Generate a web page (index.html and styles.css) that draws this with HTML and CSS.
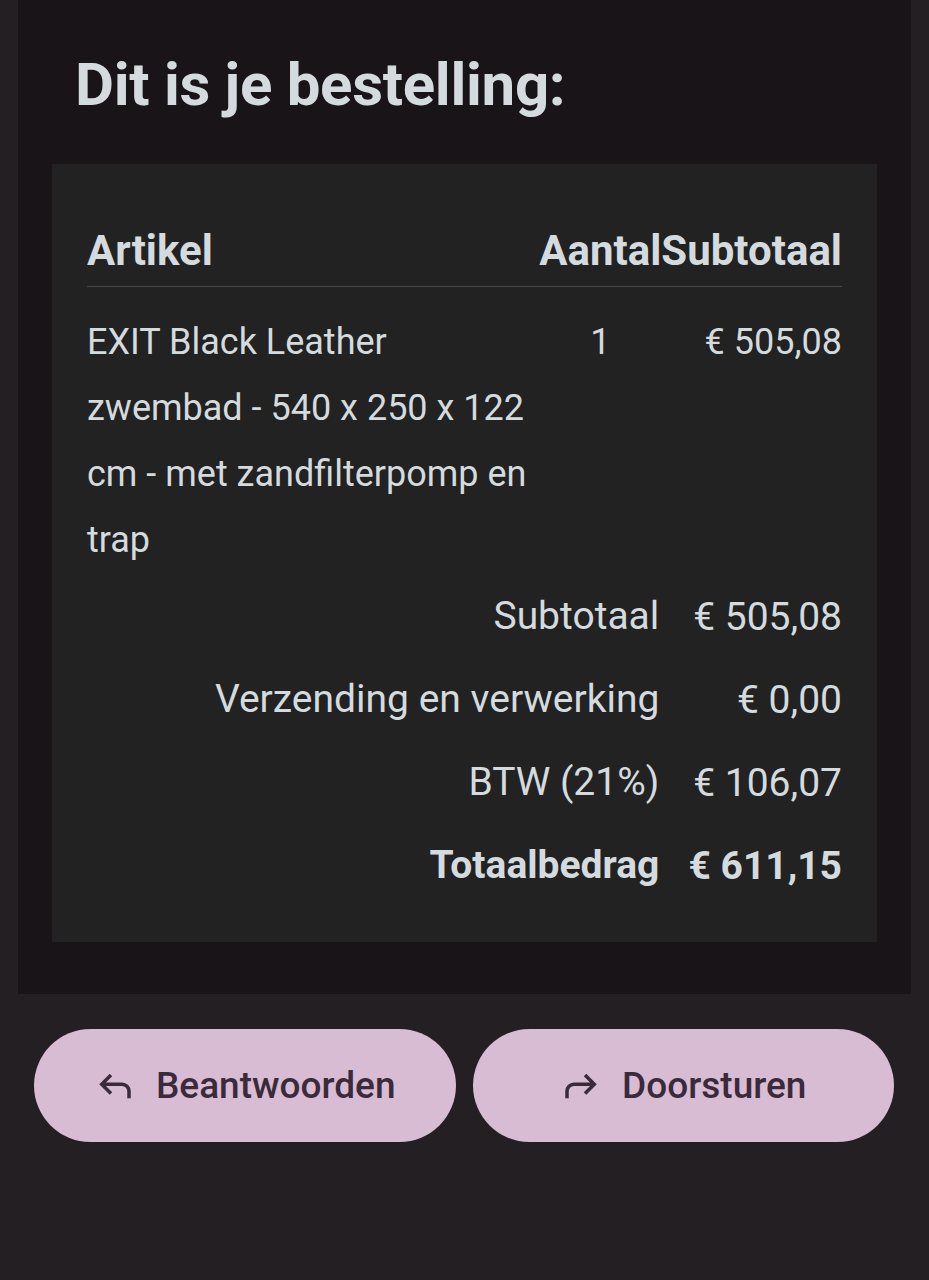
FILE: index.html
```html
<!DOCTYPE html>
<html lang="nl">
<head>
    <meta charset="UTF-8">
    <meta name="viewport" content="width=device-width, initial-scale=1.0">
    <title>Bestelling</title>
    <link rel="stylesheet" href="styles.css">
</head>
<body>
    <div class="mail">
        <h1 class="title">Dit is je bestelling:</h1>
        <div class="order">
            <table class="order-table">
                <thead>
                    <tr>
                        <th class="col-item">Artikel</th>
                        <th class="col-qty">Aantal</th>
                        <th class="col-price">Subtotaal</th>
                    </tr>
                </thead>
                <tbody>
                    <tr class="item">
                        <td class="col-item">EXIT Black Leather zwembad - 540 x 250 x 122 cm - met zandfilterpomp en trap</td>
                        <td class="col-qty">1</td>
                        <td class="col-price">€ 505,08</td>
                    </tr>
                </tbody>
                <tfoot>
                    <tr>
                        <td colspan="2" class="sum-label">Subtotaal</td>
                        <td class="sum-value">€ 505,08</td>
                    </tr>
                    <tr>
                        <td colspan="2" class="sum-label">Verzending en verwerking</td>
                        <td class="sum-value">€ 0,00</td>
                    </tr>
                    <tr>
                        <td colspan="2" class="sum-label">BTW (21%)</td>
                        <td class="sum-value">€ 106,07</td>
                    </tr>
                    <tr class="total">
                        <td colspan="2" class="sum-label">Totaalbedrag</td>
                        <td class="sum-value">€ 611,15</td>
                    </tr>
                </tfoot>
            </table>
        </div>
    </div>

    <div class="actions">
        <button type="button" class="pill">
            <svg class="pill-icon" viewBox="0 -960 960 960"><path d="M760-200v-160q0-50-35-85t-85-35H273l144 144-57 56-240-240 240-240 57 56-144 144h367q83 0 141.5 58.5T840-360v160h-80Z"/></svg>
            <span>Beantwoorden</span>
        </button>
        <button type="button" class="pill">
            <svg class="pill-icon" viewBox="0 -960 960 960"><path d="M120-200v-160q0-83 58.5-141.5T320-560h367L543-704l57-56 240 240-240 240-57-56 144-144H320q-50 0-85 35t-35 85v160h-80Z"/></svg>
            <span>Doorsturen</span>
        </button>
    </div>
</body>
</html>
```

FILE: styles.css
```css
*{
    margin: 0;
    padding: 0;
    box-sizing: border-box;
}
body{
    background-color: #241f23;
    font-family: Roboto, "Noto Sans", sans-serif;
    color: #d4dbde;
}
.mail{
    margin: 0 18px;
    background-color: #181418;
    padding: 50px 34px 52px;
}
.title{
    padding-left: 23px;
    font-size: 60px;
    font-weight: 700;
    line-height: 70px;
    letter-spacing: -0.3px;
    margin-bottom: 44px;
}
.order{
    background-color: #222222;
    padding: 63px 35px 35px;
}
.order-table{
    width: 100%;
    border-collapse: collapse;
    font-size: 39px;
}
.order-table th{
    font-weight: 700;
    font-size: 42px;
    line-height: 48px;
    padding-bottom: 11px;
    border-bottom: 1px solid #464646;
    text-align: left;
    white-space: nowrap;
}
.order-table th.col-qty,
.order-table th.col-price{
    text-align: right;
    width: 1%;
}
.item td{
    font-size: 36px;
    line-height: 66px;
    vertical-align: top;
    padding: 22px 0 2px;
}
.item .col-item{
    padding-right: 8px;
}
.item .col-qty{
    text-align: center;
}
.item .col-price{
    text-align: right;
    white-space: nowrap;
}
.sum-label{
    text-align: right;
    line-height: 83px;
    padding-right: 2px;
    white-space: nowrap;
}
.sum-value{
    text-align: right;
    white-space: nowrap;
}
.total td{
    font-weight: 700;
}
.actions{
    display: flex;
    gap: 17px;
    padding: 35px 35px 0 34px;
}
.pill{
    flex: 1;
    height: 113px;
    border: none;
    border-radius: 57px;
    background-color: #d7bcd4;
    color: #3b2a39;
    font-family: Roboto, "Noto Sans", sans-serif;
    font-size: 37px;
    font-weight: 500;
    display: flex;
    align-items: center;
    justify-content: center;
    gap: 20px;
}
.pill-icon{
    width: 42px;
    height: 42px;
    fill: #3b2a39;
}
```
